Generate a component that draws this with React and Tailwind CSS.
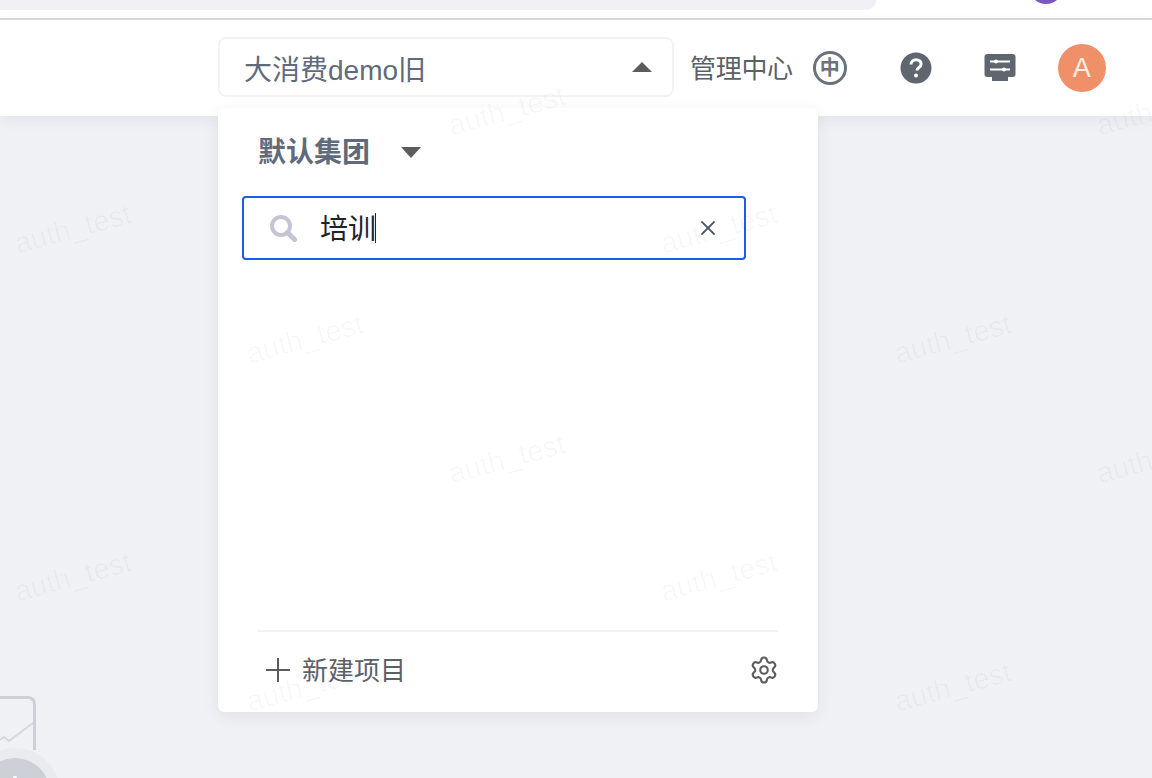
import { X, Settings } from 'lucide-react';

const marks = [
  [73, 229], [305, 339], [507, 111], [507, 459], [719, 229], [719, 577],
  [73, 577], [305, 687], [953, 339], [953, 687], [1155, 111], [1155, 459],
];

export default function App() {
  return (
    <div className="relative h-[778px] w-[1152px] overflow-hidden bg-[#f0f1f5] font-['Helvetica','Liberation_Sans','Noto_Sans_CJK_SC',sans-serif]">
      {/* browser chrome strip */}
      <div className="relative h-[18px] bg-white">
        <div className="h-[10px] w-[876px] rounded-br-[20px] bg-[#f0f1f4]" />
        <div className="absolute left-[1029px] top-[-30px] h-[34px] w-[34px] rounded-full bg-[#7e57c2]" />
      </div>
      <div className="h-[2px] bg-[#dadada]" />

      {/* header */}
      <header className="relative flex h-[96px] items-center bg-white pl-[218px] shadow-[0_4px_14px_rgba(40,50,80,0.06)]">
        <div className="flex h-[60px] w-[456px] -translate-y-[1px] items-center justify-between rounded-[8px] border-2 border-[#f3f3f4] pl-[24px] pr-[20px]">
          <span className="translate-y-[4px] text-[28px] text-[#5f6b7a]">大消费demo旧</span>
          <span className="h-0 w-0 border-x-[10px] border-b-[10px] border-x-transparent border-b-[#5c5c5c]" />
        </div>
        <span className="ml-[16px] translate-y-[1px] text-[26px] tracking-[-0.3px] text-[#5c6166]">管理中心</span>
        <div className="ml-[20px] flex h-[34px] w-[34px] items-center justify-center rounded-full border-[3px] border-[#69727d]">
          <span className="text-[20px] font-bold leading-none text-[#69727d]">中</span>
        </div>
        <svg className="ml-[53px]" width="32" height="32" viewBox="0 0 32 32">
          <circle cx="16" cy="16" r="15.500" fill="#5f6670" />
          <path d="M11 12.500c0-3 2.300-4.700 5.100-4.700 3 0 5 1.700 5 4.200 0 2-1.100 2.900-2.400 3.800-1.200.8-1.700 1.400-1.700 2.800" fill="none" stroke="#fff" strokeWidth="3" />
          <circle cx="16" cy="23.500" r="2" fill="#fff" />
        </svg>
        <svg className="ml-[52px]" width="32" height="30" viewBox="0 0 32 30">
          <rect x="0.500" y="1" width="31" height="23" rx="3" fill="#5f6670" />
          <rect x="8" y="24" width="16" height="4" fill="#5f6670" />
          <path d="M6 8.500h20M6 16.500h20" stroke="#fff" strokeWidth="2" />
          <circle cx="12" cy="8.500" r="2" fill="#fff" />
          <circle cx="20" cy="16.500" r="2" fill="#fff" />
        </svg>
        <div className="ml-[42px] flex h-[48px] w-[48px] items-center justify-center rounded-full bg-[#f09068] text-[27px] font-light text-[#fdeee7]">
          A
        </div>
      </header>

      {/* project dropdown */}
      <div className="absolute left-[218px] top-[108px] flex h-[604px] w-[600px] flex-col rounded-[6px] bg-white pl-[24px] pr-[40px] shadow-[0_4px_16px_rgba(40,50,80,0.08)]">
        <div className="flex h-[88px] items-center pl-[16px]">
          <span className="translate-y-[1px] text-[28px] font-bold text-[#5f6b7a]">默认集团</span>
          <span className="ml-[31px] h-0 w-0 border-x-[10px] border-t-[11px] border-x-transparent border-t-[#5c5c5c]" />
        </div>
        <div className="flex h-[64px] w-[504px] items-center rounded-[4px] border-2 border-[#1a5cf0] pl-[25px] pr-[24px]">
          <svg width="28" height="28" viewBox="0 0 28 28" fill="none">
            <circle cx="12" cy="12" r="9" stroke="#c4c4d4" strokeWidth="4" />
            <path d="M18.500 18.500l7 7" stroke="#c4c4d4" strokeWidth="5" strokeLinecap="round" />
          </svg>
          <span className="ml-[23px] translate-y-[2px] text-[28px] text-[#20242a]">培训</span>
          <span className="-ml-[1px] h-[30px] w-px bg-[#20242a]" />
          <X size={24} strokeWidth={1.8} className="ml-auto text-[#525c6a]" />
        </div>
        <div className="mt-auto ml-[16px] mr-0 border-t-2 border-[#f2f2f3]">
          <div className="flex h-[80px] items-center pb-[4px] pl-[8px]">
            <svg width="24" height="24" viewBox="0 0 24 24">
              <path d="M0 12h24M12 0v24" stroke="#5c5c5c" strokeWidth="2" />
            </svg>
            <span className="ml-[12px] translate-y-[1px] text-[26px] text-[#5c6166]">新建项目</span>
            <Settings size={30} strokeWidth={1.7} className="ml-auto translate-x-[1px] text-[#5c5c5c]" />
          </div>
        </div>
      </div>

      {/* chart card peeking in at bottom left */}
      <div className="absolute left-[-40px] top-[696px] h-[54px] w-[76px] rounded-tr-[8px] border-r-[3px] border-t-[3px] border-[#cdd0d6]" />
      <svg className="absolute left-0 top-[720px]" width="34" height="26" viewBox="0 0 34 26">
        <path d="M0 20l4-3 5 4L33 3" fill="none" stroke="#d5d7dc" strokeWidth="2" />
      </svg>
      <div className="absolute left-[-30px] top-[748px] flex h-[90px] w-[90px] items-center justify-center rounded-full bg-[#e9ebef]">
        <div className="flex h-[70px] w-[70px] justify-center rounded-full bg-[#cdd0d6] pt-[18px]">
          <span className="h-[4px] w-[4px] rounded-full bg-white" />
        </div>
      </div>

      {/* watermark */}
      {marks.map(([x, y]) => (
        <span
          key={`${x}-${y}`}
          className="pointer-events-none absolute -translate-x-1/2 -translate-y-1/2 -rotate-[15deg] whitespace-nowrap text-[29px] text-black/[0.03]"
          style={{ left: x, top: y }}
        >
          auth_test
        </span>
      ))}
    </div>
  );
}
